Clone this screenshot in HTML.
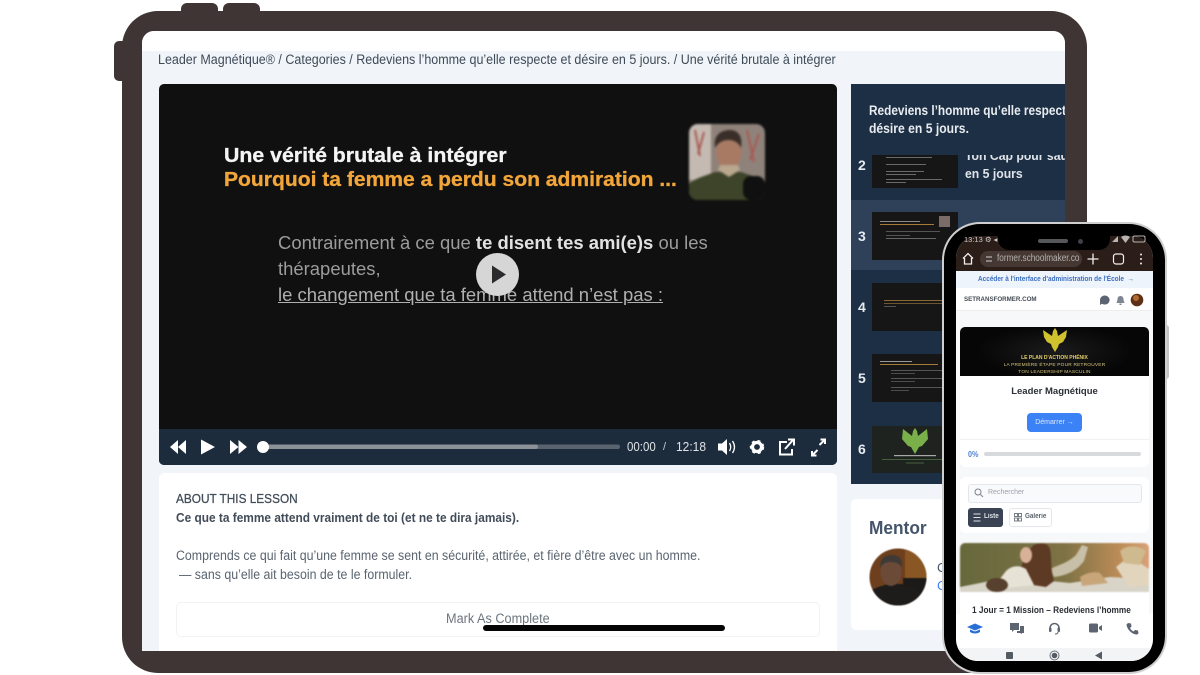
<!DOCTYPE html>
<html><head><meta charset="utf-8">
<style>
html,body{margin:0;padding:0;background:#fff}
#r{position:relative;width:1200px;height:675px;overflow:hidden;background:#fff;font-family:"Liberation Sans",sans-serif;filter:blur(.35px)}
#r div,#r svg{position:absolute}
.t{white-space:nowrap;transform-origin:0 0}
.n{color:#e6ebf0;font-weight:bold;font-size:14px;left:858px}
.th{left:872px;width:86px;background:#161616}
.c{text-align:center}
</style></head><body><div id="r">

<!-- tablet frame -->
<div style="left:181px;top:3px;width:37px;height:20px;background:#3f3535;border-radius:6px 6px 0 0"></div>
<div style="left:223px;top:3px;width:37px;height:20px;background:#3f3535;border-radius:6px 6px 0 0"></div>
<div style="left:114px;top:41px;width:20px;height:40px;background:#3f3535;border-radius:5px 0 0 5px"></div>
<div style="left:122px;top:11px;width:965px;height:662px;background:#3f3535;border-radius:36px"></div>
<div style="left:142px;top:31px;width:923px;height:620px;background:#f1f5f9;border-radius:12px 12px 0 0;overflow:hidden">
  <div style="left:0;top:0;width:923px;height:20px;background:#fff"></div>
</div>

<div class="t" style="left:158px;top:52px;font-size:13.5px;color:#3f4a57;transform:scaleX(.926)">Leader Magnétique® / Categories / Redeviens l’homme qu’elle respecte et désire en 5 jours. / Une vérité brutale à intégrer</div>

<!-- video -->
<div style="left:159px;top:84px;width:678px;height:381px;background:#101011;border-radius:5px;overflow:hidden">
  <div style="left:0;top:345px;width:678px;height:36px;background:#1c2c3d"></div>
</div>
<div class="t" style="left:224px;top:145px;font-size:20px;font-weight:bold;color:#f4f4f4;transform:scaleX(1.064);-webkit-text-stroke:.3px #f4f4f4">Une vérité brutale à intégrer</div>
<div class="t" style="left:224px;top:169px;font-size:20px;font-weight:bold;color:#f2a63a;transform:scaleX(1.053);-webkit-text-stroke:.3px #f2a63a">Pourquoi ta femme a perdu son admiration ...</div>
<div class="t" style="left:278px;top:233px;font-size:18px;color:#9c9c9c;transform:scaleX(1.025)">Contrairement à ce que <b style="color:#e2e2e2">te disent tes ami(e)s</b> ou les</div>
<div class="t" style="left:278px;top:259px;font-size:18px;color:#9c9c9c;transform:scaleX(1.025)">thérapeutes,</div>
<div class="t" style="left:278px;top:285px;font-size:18px;color:#b0b0b0;text-decoration:underline;transform:scaleX(1.026)">le changement que ta femme attend n’est pas :</div>

<!-- presenter thumb -->
<svg style="left:689px;top:124px;filter:blur(1px)" width="76" height="76" viewBox="0 0 76 76">
  <defs><clipPath id="pc"><rect width="76" height="76" rx="9"/></clipPath></defs>
  <g clip-path="url(#pc)">
    <rect width="76" height="76" fill="#8f827a"/>
    <rect x="0" y="0" width="22" height="56" fill="#c4bab2"/>
    <path d="M6 6l5 26M15 8l-6 22M58 6l7 32M70 10l-9 26" stroke="#a85a52" stroke-width="2" fill="none"/>
    <path d="M0 76V60c6-6 16-8 26-12h26c8 3 18 5 24 12v16z" fill="#3e4429"/>
    <ellipse cx="40" cy="28" rx="12.500" ry="18" fill="#a87a64"/>
    <path d="M26 24c-2-14 7-18 15-18 8 0 13 6 11 18-3-7-9-8-13-8s-10 2-13 8z" fill="#3a2f28"/>
    <path d="M29 46l11 7 11-7-2-5H31z" fill="#b9a78e"/>
    <rect x="54" y="52" width="22" height="24" rx="8" fill="#101010"/>
  </g>
</svg>

<!-- play button -->
<div style="left:476px;top:253px;width:43px;height:43px;border-radius:50%;background:#d6d6d6"></div>
<svg style="left:476px;top:253px" width="43" height="43"><path d="M16 12.500v18l14-9z" fill="#2b2b2e"/></svg>

<!-- controls -->
<svg style="left:159px;top:429px" width="678" height="36">
  <g fill="#fff">
    <path d="M11 18l8-7v14zM19 18l8-7v14z"/>
    <path d="M42 10.500l14 7.500-14 7.500z"/>
    <path d="M71 11l8.500 7-8.500 7zM79.500 11l8.500 7-8.500 7z"/>
  </g>
  <rect x="100" y="15.500" width="361" height="4.500" rx="2.200" fill="#59636f"/>
  <rect x="100" y="15.500" width="279" height="4.500" rx="2.200" fill="#8b9197"/>
  <circle cx="104" cy="18" r="6" fill="#fff"/>
  <path d="M559 14.500h4l5-4.500v16l-5-4.500h-4z" fill="#fff"/>
  <path d="M570.500 14c1.500 2.500 1.500 5.500 0 8M573.500 12c2.500 3.800 2.500 8.200 0 12" stroke="#fff" stroke-width="1.300" fill="none"/>
  <circle cx="598" cy="18" r="4.500" fill="none" stroke="#fff" stroke-width="3.200"/>
  <circle cx="598" cy="18" r="6.300" fill="none" stroke="#fff" stroke-width="1.800" stroke-dasharray="3 3"/>
  <g fill="none" stroke="#fff" stroke-width="2">
    <path d="M621 14v11.500h12V20M628 13h-7v2"/>
    <path d="M626 20l8-9M629 10.500h6v6"/>
    <path d="M653 22v4.500h4.500M653.500 26l5-5M666 15v-4.500h-4.500M665.500 11l-5 5"/>
  </g>
</svg>
<div class="t" style="left:627px;top:440px;font-size:12.500px;color:#dfe3e7;transform:scaleX(.92)">00:00</div>
<div class="t" style="left:663px;top:441px;font-size:11px;color:#c7ccd2">/</div>
<div class="t" style="left:676px;top:440px;font-size:12.500px;color:#dfe3e7;transform:scaleX(.96)">12:18</div>

<!-- about card -->
<div style="left:159px;top:473px;width:678px;height:178px;background:#fff;border-radius:6px 6px 0 0"></div>
<div class="t" style="left:176px;top:492px;font-size:12.500px;color:#414c58;transform:scaleX(.945);-webkit-text-stroke:.25px #414c58">ABOUT THIS LESSON</div>
<div class="t" style="left:176px;top:511px;font-size:12.500px;font-weight:bold;color:#414c58;transform:scaleX(.95)">Ce que ta femme attend vraiment de toi (et ne te dira jamais).</div>
<div class="t" style="left:176px;top:548px;font-size:13.500px;color:#5a6470;transform:scaleX(.916)">Comprends ce qui fait qu’une femme se sent en sécurité, attirée, et fière d’être avec un homme.</div>
<div class="t" style="left:179px;top:566.500px;font-size:13.500px;color:#5a6470;transform:scaleX(.916)">— sans qu’elle ait besoin de te le formuler.</div>
<div style="left:176px;top:602px;width:642px;height:33px;border:1px solid #f0f2f4;border-radius:5px;background:#fff"></div>
<div class="t" style="left:446px;top:611px;font-size:13.500px;color:#6c757d;transform:scaleX(.94)">Mark As Complete</div>
<div style="left:483px;top:625px;width:242px;height:6px;background:#050505;border-radius:3px"></div>

<!-- sidebar -->
<div style="left:851px;top:84px;width:214px;height:400px;background:#1d2f44;overflow:hidden">
  <div style="left:0;top:116px;width:214px;height:70px;background:#2f4059"></div>
</div>
<div style="left:851px;top:155px;width:214px;height:36px;overflow:hidden">
  <div class="t" style="left:114px;top:-7px;font-size:13px;font-weight:bold;color:#dfe4ea;transform:scaleX(.94)">Ton Cap pour sauver</div>
  <div class="t" style="left:114px;top:11px;font-size:13px;font-weight:bold;color:#dfe4ea;transform:scaleX(.94)">en 5 jours</div>
  <div class="th" style="left:21px;top:0;height:33px"></div>
</div>
<svg style="left:872px;top:155px" width="86" height="33" fill="#6a6a6a">
  <rect x="14" y="2" width="46" height="1"/><rect x="14" y="9" width="40" height="1"/><rect x="14" y="16" width="38" height="1"/><rect x="14" y="19" width="30" height="1"/><rect x="14" y="24" width="56" height="1"/><rect x="14" y="27" width="20" height="1"/>
</svg>
<div style="left:869px;top:103px;width:196px;height:18px;overflow:hidden"><div class="t" style="left:0;top:0;font-size:13.500px;font-weight:bold;color:#e8ecf0;transform:scaleX(.875)">Redeviens l’homme qu’elle respecte et</div></div>
<div class="t" style="left:869px;top:121px;font-size:13.500px;font-weight:bold;color:#e8ecf0;transform:scaleX(.9)">désire en 5 jours.</div>

<div class="t n" style="top:157px">2</div>
<div class="t n" style="top:228px">3</div>
<div class="t n" style="top:299px">4</div>
<div class="t n" style="top:370px">5</div>
<div class="t n" style="top:441px">6</div>

<div class="th" style="top:212px;height:48px"></div>
<svg style="left:872px;top:212px" width="86" height="48">
  <rect x="8" y="9" width="40" height="1" fill="#888"/><rect x="8" y="12" width="54" height="1" fill="#a67a38"/>
  <rect x="67" y="4" width="11" height="11" fill="#7c6c68"/>
  <rect x="14" y="19" width="54" height="1" fill="#555"/><rect x="14" y="23" width="24" height="1" fill="#555"/><rect x="14" y="26" width="50" height="1" fill="#666"/>
</svg>
<div class="th" style="top:283px;height:48px"></div>
<svg style="left:872px;top:283px" width="86" height="48">
  <rect x="12" y="17" width="60" height="1" fill="#8a6630"/><rect x="12" y="20" width="60" height="1" fill="#6e5730"/><rect x="12" y="23" width="12" height="1" fill="#555"/>
</svg>
<div class="th" style="top:354px;height:48px"></div>
<svg style="left:872px;top:354px" width="86" height="48">
  <rect x="8" y="7" width="32" height="1" fill="#999"/><rect x="8" y="10" width="58" height="1" fill="#a67a38"/>
  <rect x="19" y="16" width="56" height="1" fill="#555"/><rect x="19" y="19" width="24" height="1" fill="#4c4c4c"/><rect x="19" y="24" width="56" height="1" fill="#555"/><rect x="19" y="27" width="24" height="1" fill="#4c4c4c"/><rect x="19" y="33" width="56" height="1" fill="#555"/><rect x="19" y="36" width="18" height="1" fill="#4c4c4c"/>
</svg>
<div class="th" style="top:426px;height:47px;background:#1f2320"></div>
<svg style="left:872px;top:426px" width="86" height="47">
  <path d="M43 2l2 3 1 5 9-7 1 10-6 7-3 1-4 7-4-7-3-1-6-7 1-10 9 7 1-5z" fill="#7ab04a"/>
  <rect x="22" y="29" width="42" height="1.200" fill="#a8a8a8"/><rect x="10" y="33" width="66" height="1" fill="#46603e"/><rect x="34" y="36.500" width="18" height="1" fill="#46603e"/>
</svg>

<!-- mentor card -->
<div style="left:851px;top:499px;width:214px;height:131px;background:#fff;border-radius:5px"></div>
<div class="t" style="left:869px;top:518px;font-size:18px;font-weight:bold;color:#44546a;transform:scaleX(.96)">Mentor</div>
<svg style="left:869px;top:548px;filter:blur(.6px)" width="58" height="58">
  <defs><clipPath id="mc"><circle cx="29" cy="29" r="28.500"/></clipPath></defs>
  <g clip-path="url(#mc)">
    <rect width="58" height="58" fill="#6e3f1c"/>
    <rect x="36" y="0" width="22" height="30" fill="#8a5624"/>
    <rect x="34" y="30" width="24" height="28" fill="#1c1a18"/>
    <path d="M0 58V44c6-5 16-7 20-8h14c6 2 14 5 20 12v10z" fill="#1e1c1b"/>
    <ellipse cx="22" cy="24" rx="10.500" ry="14" fill="#6b4a38"/>
    <path d="M11 20c0-10 5-13 12-13s11 4 10 12c-3-4-7-5-11-5s-8 1-11 6z" fill="#3f3a36"/>
  </g>
</svg>
<div class="t" style="left:937px;top:560px;font-size:13px;color:#44546a">C</div>
<div class="t" style="left:937px;top:578px;font-size:13px;color:#3b82f6">C</div>

<!-- phone body + screen -->
<div style="left:1164px;top:325px;width:5px;height:54px;background:#c4c4c4;border-radius:0 3px 3px 0"></div>
<div style="left:942px;top:222px;width:225px;height:452px;background:#cfcfcf;border-radius:38px"></div>
<div style="left:944px;top:224px;width:221px;height:448px;background:#000;border-radius:36px"></div>
<div style="left:956px;top:236px;width:197px;height:425px;background:#f7f8fa;border-radius:22px;overflow:hidden">
  <div style="left:0;top:0;width:197px;height:35px;background:#2b1e19"></div>
  <div style="left:0;top:35px;width:197px;height:17px;background:#eef4fc"></div>
  <div style="left:0;top:52px;width:197px;height:22px;background:#fff;border-bottom:1px solid #eee"></div>
  <div style="left:4px;top:91px;width:189px;height:140px;background:#fff;border-radius:6px"></div>
  <div style="left:4px;top:203px;width:189px;height:1px;background:#f0f1f3"></div>
  <div style="left:4px;top:241px;width:189px;height:56px;background:#fff;border-radius:6px"></div>
  <div style="left:4px;top:307px;width:189px;height:80px;background:#fff;border-radius:6px"></div>
  <div style="left:0;top:378px;width:197px;height:47px;background:#fff"></div>
  <div style="left:0;top:412px;width:197px;height:13px;background:#f3f4f6"></div>
</div>

<!-- notch -->
<div style="left:998px;top:232px;width:112px;height:18px;background:#000;border-radius:0 0 11px 11px"></div>
<div style="left:1038px;top:239px;width:30px;height:3.500px;background:#55575b;border-radius:2px"></div>
<div style="left:1078px;top:238.500px;width:5px;height:5px;background:#3f4147;border-radius:50%"></div>

<!-- status -->
<div class="t" style="left:964px;top:235px;font-size:7.500px;color:#d0ccca">13:13 ⚙ ◂</div>
<svg style="left:1110px;top:234px" width="38" height="10" fill="#b9b4b2"><path d="M2 8l6-6v6zM11 3c3-2 6-2 9 0l-4.500 6z"/><rect x="23" y="2" width="12" height="6" rx="1.500" fill="none" stroke="#b9b4b2"/></svg>

<!-- browser bar -->
<svg style="left:960px;top:250px" width="190" height="18">
  <path d="M3 8.500L8 3.500l5 5M4.500 8v6h7V8" fill="none" stroke="#f1eeee" stroke-width="1.300"/>
  <rect x="20" y="1" width="102" height="16" rx="8" fill="#453833"/>
  <path d="M26 7h6M26 11h6" stroke="#a39c99" stroke-width="1.400"/>
  <path d="M133 3.500v11M127.500 9h11" stroke="#f1eeee" stroke-width="1.300"/>
  <rect x="153.500" y="4" width="10" height="10" rx="2.500" fill="none" stroke="#f1eeee" stroke-width="1.200"/>
  <circle cx="181" cy="4.500" r="1" fill="#f1eeee"/><circle cx="181" cy="9" r="1" fill="#f1eeee"/><circle cx="181" cy="13.500" r="1" fill="#f1eeee"/>
</svg>
<div class="t" style="left:997px;top:253px;font-size:10px;color:#b7b1ae;transform:scaleX(.82)">former.schoolmaker.co</div>

<!-- admin strip -->
<div class="t" style="left:978px;top:276px;font-size:7px;color:#3b6fc0;font-weight:bold;transform:scaleX(.92)">Accéder à l'interface d'administration de l'École &nbsp;→</div>

<!-- phone header -->
<div class="t" style="left:964px;top:296px;font-size:6.200px;font-weight:bold;color:#444b54;letter-spacing:0">SETRANSFORMER.COM</div>
<svg style="left:1098px;top:293px" width="48" height="14">
  <path d="M2 7a4.800 4.500 0 1 1 2 3.700L2 12z" fill="#5b6470"/>
  <path d="M22.500 3c2.500 0 3 2 3 3.500s1 2.500 1 3.500h-8c0-1 1-2 1-3.500S20 3 22.500 3z" fill="#7c8590"/><rect x="21.500" y="10.500" width="2" height="1.500" fill="#7c8590"/>
  <circle cx="39" cy="7" r="6.300" fill="#5e3016"/><circle cx="38" cy="5" r="3" fill="#b06c30"/>
</svg>

<!-- hero -->
<div style="left:960px;top:327px;width:189px;height:49px;background:#060606;border-radius:5px 5px 0 0"></div>
<div style="left:980px;top:327px;width:150px;height:49px;background:radial-gradient(ellipse at center,#1b1b1d 0%,#060606 75%)"></div>
<svg style="left:1042px;top:328px" width="26" height="24"><path d="M13 0l2 3 1 5L25 2l-1 7-3 5-4 2-1 3-3 5-3-5-1-3-4-2-3-5-1-7 9 6 1-5z" fill="#cfc22e"/></svg>
<div class="c t" style="left:960px;top:355px;width:189px;font-size:5px;font-weight:bold;color:#e5cf6a">LE PLAN D'ACTION PHÉNIX</div>
<div class="c t" style="left:960px;top:363px;width:189px;font-size:4.800px;color:#d9c77a;letter-spacing:.2px">LA PREMIÈRE ÉTAPE POUR RETROUVER</div>
<div class="c t" style="left:960px;top:369.500px;width:189px;font-size:4.800px;color:#d9c77a;letter-spacing:.2px">TON LEADERSHIP MASCULIN</div>

<div class="c t" style="left:960px;top:386px;width:189px;font-size:9.500px;font-weight:bold;color:#2b2f36">Leader Magnétique</div>
<div style="left:1027px;top:413px;width:55px;height:19px;background:#3b82f6;border-radius:4px"></div>
<div class="c t" style="left:1027px;top:418.500px;width:55px;font-size:7px;color:#dbe8fb">Démarrer →</div>

<div class="t" style="left:968px;top:449.500px;font-size:8px;font-weight:bold;color:#4d82cf;transform:scaleX(.9)">0%</div>
<div style="left:984px;top:452px;width:157px;height:3.500px;background:#d7d9dc;border-radius:2px"></div>

<!-- search -->
<div style="left:968px;top:484px;width:172px;height:17px;background:#f8fafc;border:1px solid #e3e6ea;border-radius:3px"></div>
<svg style="left:974px;top:488px" width="10" height="10"><circle cx="4" cy="4" r="3" fill="none" stroke="#7a828c" stroke-width="1"/><path d="M6.500 6.500L9 9" stroke="#7a828c" stroke-width="1"/></svg>
<div class="t" style="left:988px;top:488.500px;font-size:7px;color:#9aa2ab">Rechercher</div>
<div style="left:968px;top:508px;width:35px;height:19px;background:#3a4354;border-radius:3px"></div>
<svg style="left:973px;top:513px" width="8" height="9" fill="none" stroke="#dfe3e8"><path d="M.5 1h7M.5 4.500h7M.5 8h7"/></svg>
<div class="t" style="left:984px;top:513px;font-size:7px;font-weight:bold;color:#dfe3e8;transform:scaleX(.9)">Liste</div>
<div style="left:1009px;top:508px;width:41px;height:17px;background:#fff;border:1px solid #e3e6ea;border-radius:3px"></div>
<svg style="left:1014px;top:513px" width="8" height="9" fill="none" stroke="#6a727c" stroke-width=".9"><rect x=".5" y=".5" width="3" height="3"/><rect x="4.500" y=".5" width="3" height="3"/><rect x=".5" y="5" width="3" height="3"/><rect x="4.500" y="5" width="3" height="3"/></svg>
<div class="t" style="left:1025px;top:513px;font-size:7px;font-weight:bold;color:#5a626c;transform:scaleX(.9)">Galerie</div>

<!-- photo -->
<svg style="left:960px;top:543px;filter:blur(.7px)" width="189" height="49" viewBox="0 0 189 49">
  <defs>
    <linearGradient id="bg" x1="0" x2="1"><stop offset="0" stop-color="#66683c"/><stop offset=".55" stop-color="#7d7244"/><stop offset=".85" stop-color="#bd8c58"/><stop offset="1" stop-color="#d8a278"/></linearGradient>
    <clipPath id="pp"><path d="M5 0h179a5 5 0 0 1 5 5v44H0V5a5 5 0 0 1 5-5z"/></clipPath>
  </defs>
  <g clip-path="url(#pp)">
    <rect width="189" height="49" fill="url(#bg)"/>
    <path d="M0 49V44l30-6 40-2 40 4 40-6 39 2v13z" fill="#d8d4c8"/>
    <path d="M90 26c8-4 18-6 26-14l6-10 6 2-4 14c-6 8-14 14-30 16z" fill="#c8bfa8"/>
    <path d="M60 40c-2-10 4-30 14-38 8-3 14-2 16 4 2 8 0 18 4 32l-8 6z" fill="#5c3a24"/>
    <ellipse cx="66" cy="12" rx="6" ry="8" fill="#d9b198"/>
    <path d="M46 28c6-6 14-6 20-2l8 16-26 3-12-4z" fill="#e6e2d6"/>
    <ellipse cx="37" cy="42" rx="11" ry="7" fill="#57402e"/>
    <path d="M120 34c6-4 14-6 20-4l8 10-26 3z" fill="#c8a67a"/>
    <path d="M156 24l10-8 14 4 9 6v16l-20 2z" fill="#e2d5bd"/>
    <path d="M160 8c6-6 18-6 26 0l-6 14-16-2z" fill="#cfb98e"/>
  </g>
</svg>
<div class="t" style="left:972px;top:605px;font-size:9.300px;font-weight:bold;color:#2a2d33;transform:scaleX(.89)">1 Jour = 1 Mission – Redeviens l’homme</div>

<!-- bottom nav -->
<div style="left:956px;top:614px;width:197px;height:24px;background:#fff"></div>
<svg style="left:965px;top:620px" width="180" height="16">
  <path d="M2 7l8-3.500L18 7l-8 3.500zM5 9.500v2.500c3 2 7 2 10 0V9.500l-5 2z" fill="#2a6fd6"/>
  <path d="M45 3h9v7h-5l-2 2v-2h-2zM55 6h4v7h-2v1l-2-1h-3v-2h3z" fill="#5b6470"/>
  <path d="M85 11V8a4.500 4.500 0 0 1 9 0v3" fill="none" stroke="#5b6470" stroke-width="1.500"/><rect x="84" y="7.500" width="2.500" height="4.500" rx="1" fill="#5b6470"/><rect x="92.500" y="7.500" width="2.500" height="4.500" rx="1" fill="#5b6470"/><path d="M93 12c0 1.500-1 2-3 2" fill="none" stroke="#5b6470"/>
  <rect x="124" y="3.500" width="9" height="9" rx="1.500" fill="#5b6470"/><path d="M134 7l3-2v6l-3-2z" fill="#5b6470"/>
  <path d="M163 3l3 .5.500 3-1.500 1.500c.8 1.600 2 2.800 3.500 3.500l1.500-1.500 3 .5.500 3-1.500 1c-5 0-10-5-10.500-10z" fill="#5b6470"/>
</svg>

<!-- android nav -->
<svg style="left:1000px;top:649px" width="110" height="13">
  <rect x="6" y="3" width="7" height="7" rx="1" fill="#555b62"/>
  <circle cx="54.500" cy="6.500" r="4.500" fill="none" stroke="#6e747b"/><circle cx="54.500" cy="6.500" r="2.800" fill="#555b62"/>
  <path d="M102 2.500v8l-7-4z" fill="#555b62"/>
</svg>

</div></body></html>
